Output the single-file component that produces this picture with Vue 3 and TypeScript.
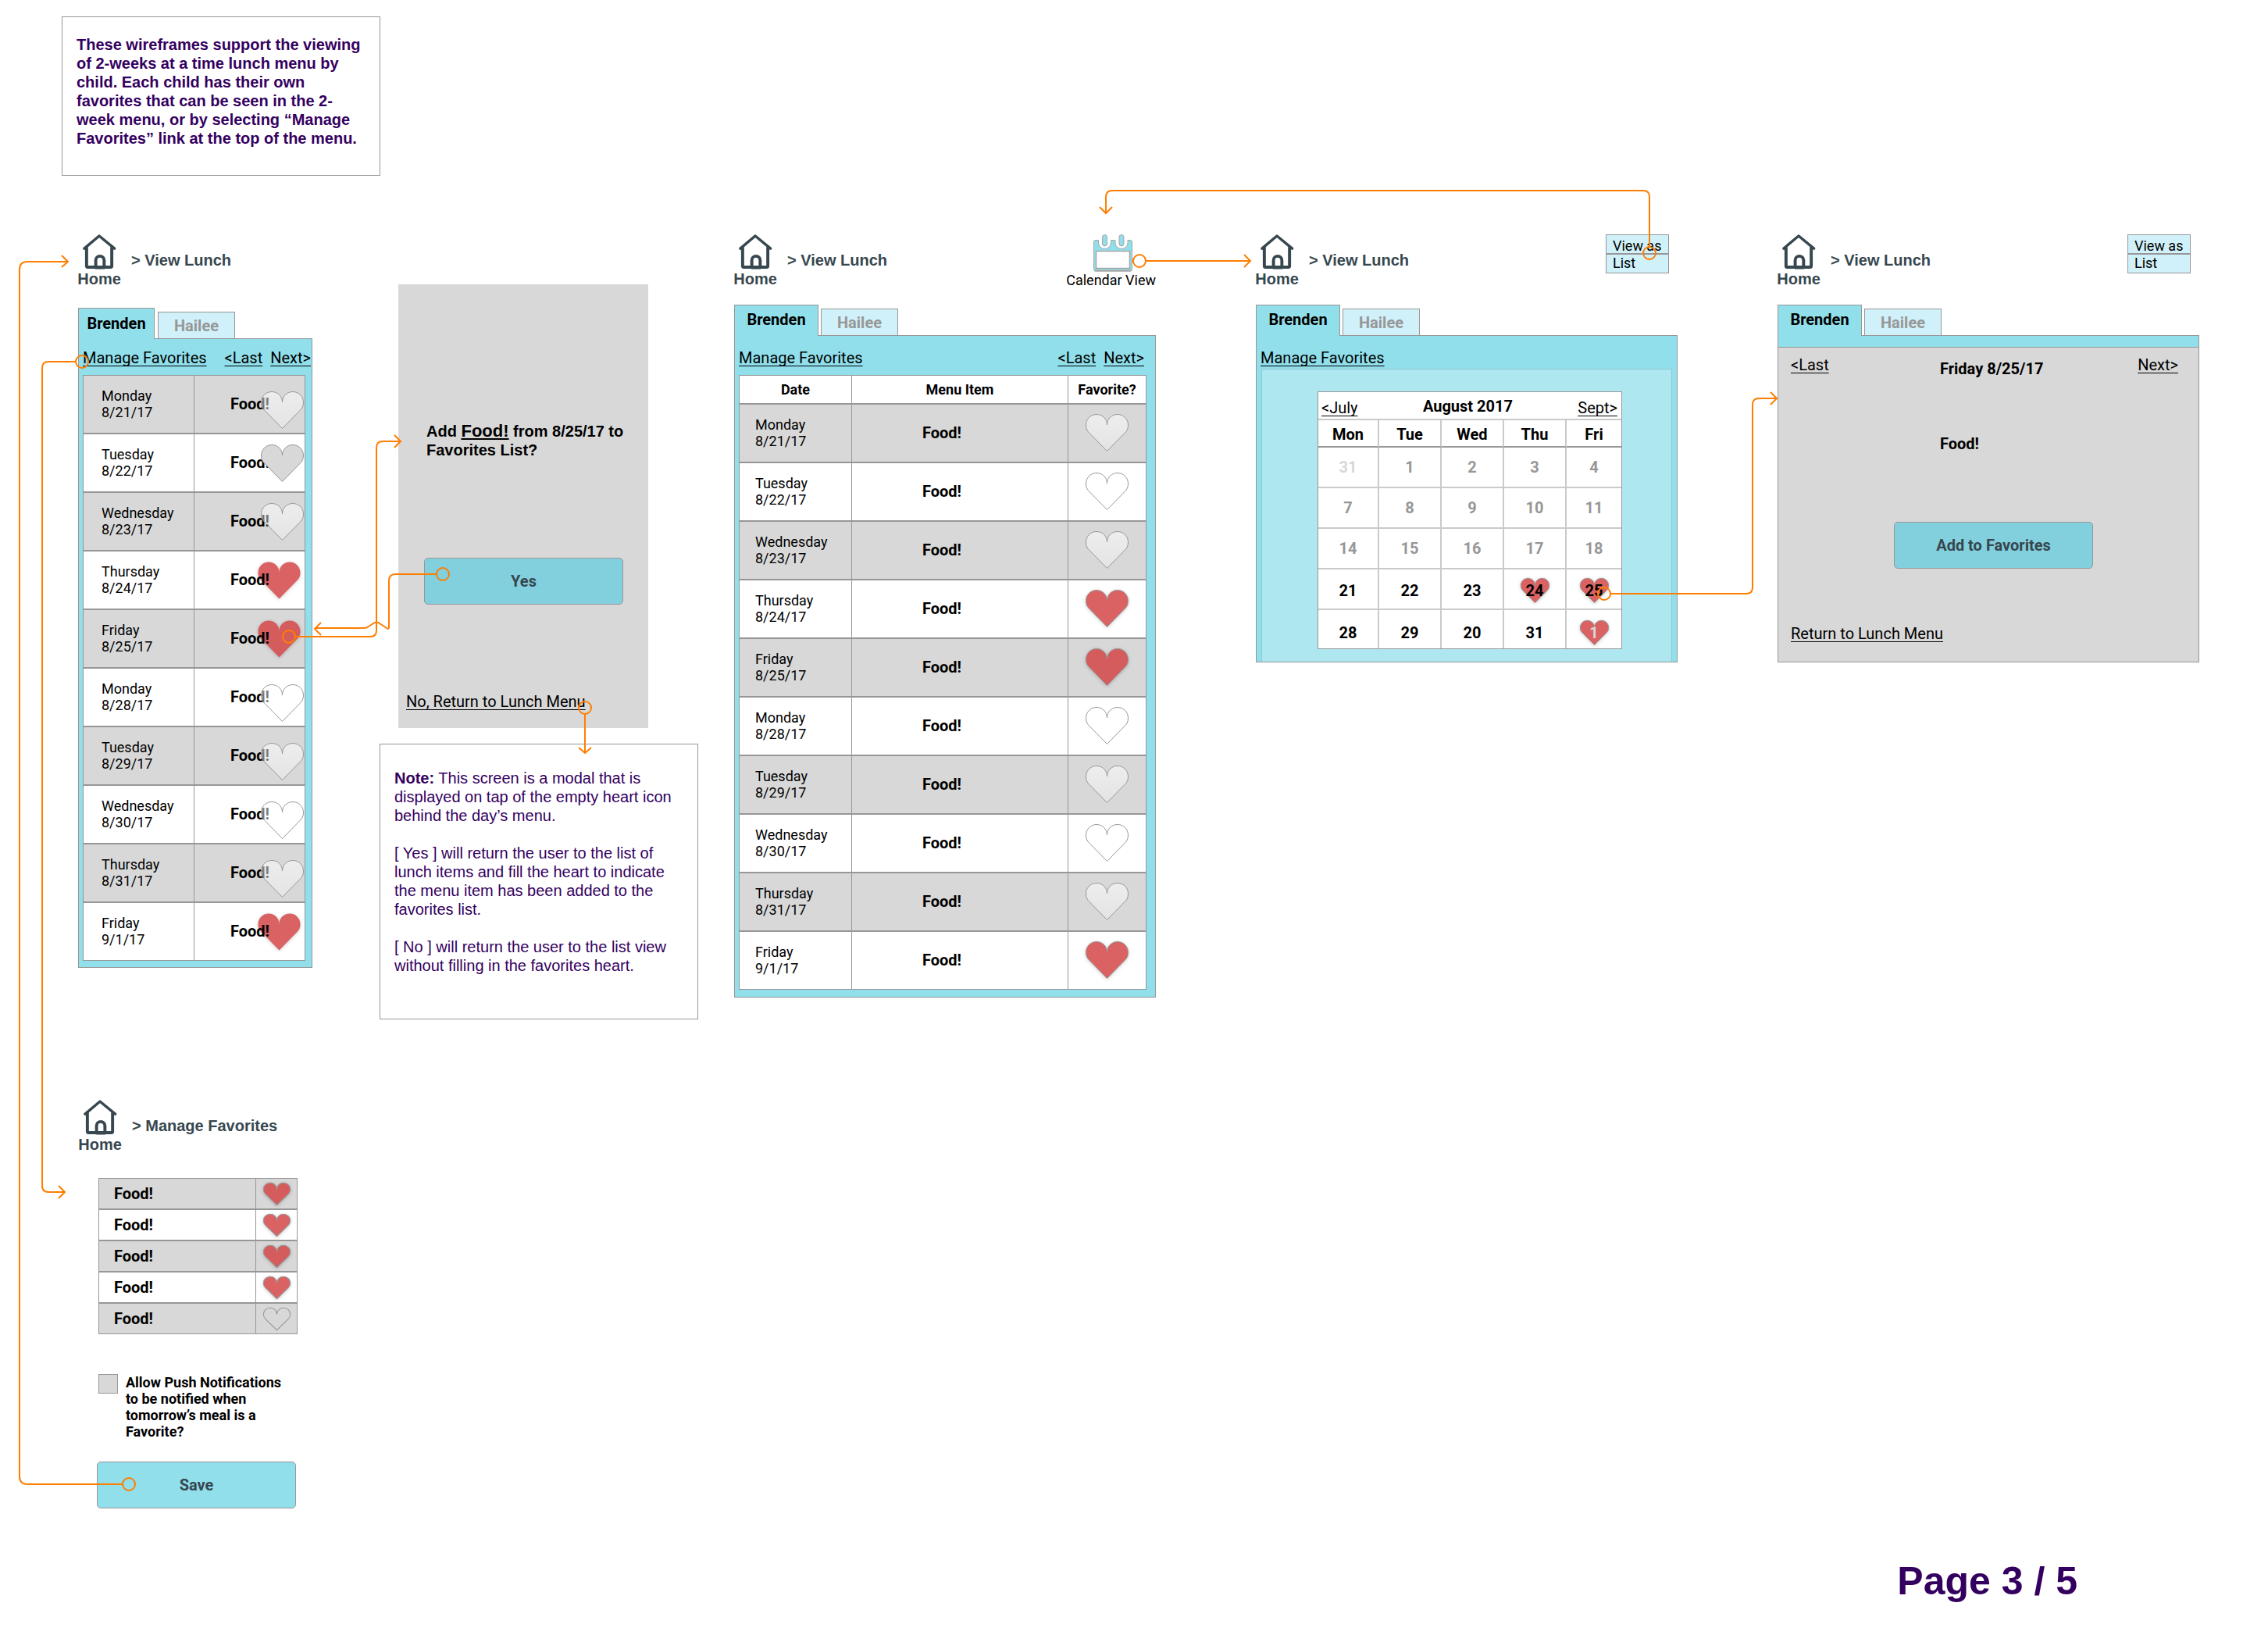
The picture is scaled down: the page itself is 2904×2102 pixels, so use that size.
<script setup lang="ts">
type HeartKind = 'empty' | 'grey' | 'full'

interface MenuDay {
  day: string
  date: string
  heart: HeartKind
  low?: boolean
}

interface CalendarDay {
  label: string
  tone: 'faint' | 'past' | 'open'
  favorite?: boolean
}

const menu: MenuDay[] = [
  { day: 'Monday', date: '8/21/17', heart: 'empty', low: true },
  { day: 'Tuesday', date: '8/22/17', heart: 'grey' },
  { day: 'Wednesday', date: '8/23/17', heart: 'empty' },
  { day: 'Thursday', date: '8/24/17', heart: 'full' },
  { day: 'Friday', date: '8/25/17', heart: 'full' },
  { day: 'Monday', date: '8/28/17', heart: 'empty', low: true },
  { day: 'Tuesday', date: '8/29/17', heart: 'empty', low: true },
  { day: 'Wednesday', date: '8/30/17', heart: 'empty', low: true },
  { day: 'Thursday', date: '8/31/17', heart: 'empty', low: true },
  { day: 'Friday', date: '9/1/17', heart: 'full' },
]

const favorites: HeartKind[] = ['full', 'full', 'full', 'full', 'empty']

const weekdays = ['Mon', 'Tue', 'Wed', 'Thu', 'Fri']

const past = (label: string): CalendarDay => ({ label, tone: 'past' })
const open = (label: string, favorite = false): CalendarDay => ({ label, tone: 'open', favorite })

const weeks: CalendarDay[][] = [
  [{ label: '31', tone: 'faint' }, past('1'), past('2'), past('3'), past('4')],
  ['7', '8', '9', '10', '11'].map(past),
  ['14', '15', '16', '17', '18'].map(past),
  [open('21'), open('22'), open('23'), open('24', true), open('25', true)],
  [open('28'), open('29'), open('20'), open('31'), { label: '1', tone: 'faint', favorite: true }],
]
</script>

<template>
  <main class="canvas">
    <svg class="defs" width="0" height="0" aria-hidden="true">
      <defs>
        <linearGradient id="sheen" x1="0" y1="0" x2="0" y2="1">
          <stop offset="0" stop-color="#fff" stop-opacity=".55" />
          <stop offset="1" stop-color="#fff" stop-opacity=".3" />
        </linearGradient>
        <path
          id="heart"
          vector-effect="non-scaling-stroke"
          d="M27.5 14C27.5 6 21.500 .5 14 .5C6.500 .5 .5 6.500 .5 14C.5 19 2 21.500 5 24.500L27.500 47.500L50 24.500C53 21.500 54.500 19 54.500 14C54.500 6.500 48.500 .5 41 .5C33.500 .5 27.500 6 27.500 14Z"
        />
        <g id="house" fill="none" stroke="#37474f" stroke-linejoin="round" stroke-linecap="round">
          <path stroke-width="3.5" d="M2.500 18.500L22 2L42 18.500" />
          <path stroke-width="4" d="M5.500 17.500V41.500Q5.500 43 7 43H37Q38.500 43 38.500 41.500V17.500" />
          <path stroke-width="4" d="M17.500 43.500V34a5.500 5.500 0 0 1 11 0V43.500Z" />
        </g>
      </defs>
    </svg>

    <p class="note intro">
      These wireframes support the viewing of 2-weeks at a time lunch menu by child. Each child has their own
      favorites that can be seen in the 2-week menu, or by selecting “Manage Favorites” link at the top of the menu.
    </p>

    <div class="board">
      <div class="phone">
        <section>
          <header class="head">
            <a class="home" href="#home"><svg width="44" height="45" viewBox="0 0 44 46"><use href="#house" /></svg>Home</a>
            <h2>&gt; View Lunch</h2>
          </header>
          <div class="tabs narrow">
            <button class="tab active" type="button">Brenden</button>
            <button class="tab" type="button">Hailee</button>
          </div>
          <div class="panel">
            <nav class="links narrow">
              <a href="#favorites">Manage Favorites</a>
              <span class="pager"><a href="#last">&lt;Last</a><a href="#next">Next&gt;</a></span>
            </nav>
            <table class="menu week compact">
              <tbody>
                <tr v-for="item in menu" :key="item.date">
                  <td class="date">{{ item.day }}<br />{{ item.date }}</td>
                  <td class="food">
                    <span>Food!</span>
                    <button type="button" class="fav over" :class="[item.heart, { low: item.low }]" :aria-label="'Favorite ' + item.date">
                      <svg class="heart big" :class="item.heart" viewBox="0 0 55 48"><use href="#heart" /></svg>
                    </button>
                  </td>
                </tr>
              </tbody>
            </table>
          </div>
        </section>

        <section class="manage">
          <header class="head">
            <a class="home" href="#home"><svg width="44" height="45" viewBox="0 0 44 46"><use href="#house" /></svg>Home</a>
            <h2>&gt; Manage Favorites</h2>
          </header>
          <table class="menu saved">
            <tbody>
              <tr v-for="(heart, i) in favorites" :key="i">
                <td class="food">Food!</td>
                <td class="mark">
                  <button type="button" class="fav" :aria-label="'Favorite ' + (i + 1)">
                    <svg class="heart small outlined" :class="[heart, { clear: heart === 'empty' }]" viewBox="0 0 55 48" preserveAspectRatio="none"><use href="#heart" /></svg>
                  </button>
                </td>
              </tr>
            </tbody>
          </table>
          <div class="push">
            <input id="push" type="checkbox" />
            <label for="push">Allow Push Notifications to be notified when tomorrow’s meal is a Favorite?</label>
          </div>
          <button class="action save" type="button">Save</button>
        </section>
      </div>

      <div class="confirm">
        <section class="modal">
          <p class="question">Add <u>Food!</u> from 8/25/17 to<br />Favorites List?</p>
          <button class="action dim" type="button">Yes</button>
          <a class="back" href="#menu">No, Return to Lunch Menu</a>
        </section>
        <div class="note remark">
          <p><b>Note:</b> This screen is a modal that is displayed on tap of the empty heart icon behind the day’s menu.</p>
          <p>[ Yes ] will return the user to the list of lunch items and fill the heart to indicate the menu item has been added to the favorites list.</p>
          <p>[ No ] will return the user to the list view without filling in the favorites heart.</p>
        </div>
      </div>

      <section class="wide">
        <header class="head">
          <a class="home" href="#home"><svg width="44" height="45" viewBox="0 0 44 46"><use href="#house" /></svg>Home</a>
          <h2>&gt; View Lunch</h2>
          <a class="calendar-link" href="#calendar">
            <svg width="50" height="48" viewBox="0 0 50 48">
              <g stroke="#a6a6a6" fill="#90dfeb">
                <path
                  d="M3 7.500H6.500V11a8 7.500 0 0 0 16 0V7.500H28V11a8 7.500 0 0 0 16 0V7.500H47Q49.500 7.500 49.500 10V44.500Q49.500 47 47 47H3Q.5 47 .5 44.500V10Q.5 7.500 3 7.500Z"
                />
                <path stroke-width="2" d="M1.500 46.500H48.500" />
                <rect x="3.500" y="21.500" width="43" height="22" fill="#fff" stroke-width="1.5" />
                <rect x="11.500" y=".5" width="6" height="14.500" rx="3" />
                <rect x="33" y=".5" width="6" height="14.500" rx="3" />
              </g>
            </svg>
            Calendar View
          </a>
        </header>
        <div class="tabs">
          <button class="tab active" type="button">Brenden</button>
          <button class="tab" type="button">Hailee</button>
        </div>
        <div class="panel">
          <nav class="links">
            <a href="#favorites">Manage Favorites</a>
            <span class="pager"><a href="#last">&lt;Last</a><a href="#next">Next&gt;</a></span>
          </nav>
          <table class="menu week full-list">
            <thead>
              <tr>
                <th scope="col">Date</th>
                <th scope="col">Menu Item</th>
                <th scope="col">Favorite?</th>
              </tr>
            </thead>
            <tbody>
              <tr v-for="item in menu" :key="item.date">
                <td class="date">{{ item.day }}<br />{{ item.date }}</td>
                <td class="food">Food!</td>
                <td class="mark">
                  <button type="button" class="fav" :aria-label="'Favorite ' + item.date">
                    <svg class="heart big outlined" :class="item.heart === 'full' ? 'full' : 'empty'" viewBox="0 0 55 48"><use href="#heart" /></svg>
                  </button>
                </td>
              </tr>
            </tbody>
          </table>
        </div>
      </section>

      <section class="wide spaced">
        <header class="head">
          <a class="home" href="#home"><svg width="44" height="45" viewBox="0 0 44 46"><use href="#house" /></svg>Home</a>
          <h2>&gt; View Lunch</h2>
          <a class="list-link" href="#list"><span>View as</span><span>List</span></a>
        </header>
        <div class="tabs">
          <button class="tab active" type="button">Brenden</button>
          <button class="tab" type="button">Hailee</button>
        </div>
        <div class="panel">
          <nav class="links calendar-nav"><a href="#favorites">Manage Favorites</a></nav>
          <div class="backdrop">
            <div class="calendar">
              <div class="month">
                <a href="#july">&lt;July</a>
                <h3>August 2017</h3>
                <a href="#sept">Sept&gt;</a>
              </div>
              <table class="days">
                <thead>
                  <tr>
                    <th v-for="name in weekdays" :key="name" scope="col">{{ name }}</th>
                  </tr>
                </thead>
                <tbody>
                  <tr v-for="(week, w) in weeks" :key="w" :class="{ current: w > 2 }">
                    <td v-for="day in week" :key="day.label" :class="day.tone">
                      <span class="day">
                        <svg v-if="day.favorite" class="heart tiny full outlined" viewBox="0 0 55 48" preserveAspectRatio="none"><use href="#heart" /></svg>
                        <b>{{ day.label }}</b>
                      </span>
                    </td>
                  </tr>
                </tbody>
              </table>
            </div>
          </div>
        </div>
      </section>

      <section class="wide spaced">
        <header class="head">
          <a class="home" href="#home"><svg width="44" height="45" viewBox="0 0 44 46"><use href="#house" /></svg>Home</a>
          <h2>&gt; View Lunch</h2>
          <a class="list-link" href="#list"><span>View as</span><span>List</span></a>
        </header>
        <div class="tabs">
          <button class="tab active" type="button">Brenden</button>
          <button class="tab" type="button">Hailee</button>
        </div>
        <div class="panel detail">
          <div class="sheet">
            <div class="sheet-head">
              <a href="#last">&lt;Last</a>
              <h3>Friday 8/25/17</h3>
              <a href="#next">Next&gt;</a>
            </div>
            <p class="dish">Food!</p>
            <button class="action dim" type="button">Add to Favorites</button>
            <a class="back" href="#menu">Return to Lunch Menu</a>
          </div>
        </div>
      </section>
    </div>

    <footer class="page">Page 3 / 5</footer>

    <svg class="flows" aria-hidden="true">
      <!-- Save returns to View Lunch -->
      <circle cx="165" cy="1900" r="8" />
      <path d="M157 1900H35Q25 1900 25 1890V345Q25 335 35 335H87M79 327L87 335L79 342" />
      <!-- Manage Favorites opens its screen -->
      <circle cx="105" cy="463" r="8" />
      <path d="M97 463H62Q54 463 54 471V1518Q54 1526 62 1526H83M75 1518L83 1526L75 1534" />
      <!-- A heart opens the confirmation -->
      <circle cx="370" cy="815" r="8" />
      <path d="M378 815H474Q482 815 482 807V573Q482 565 490 565H513M505 557L513 565L505 573" />
      <!-- Yes returns to the list -->
      <circle cx="567" cy="735" r="8" />
      <path d="M559 735H506Q498 735 498 744V803Q498 806 495 804L486 798Q482 795 478 798L472 802Q469 804 466 804H404M411 797L403 805L411 813" />
      <circle cx="749" cy="906" r="8" />
      <path d="M749 914V964M741 957L749 964L757 957" />
      <circle cx="1459" cy="334" r="8" />
      <path d="M1467 334H1601M1593 326L1601 334L1593 342" />
      <circle cx="2112" cy="324" r="8" />
      <path d="M2112 316V252Q2112 244 2104 244H1424Q1416 244 1416 252V272M1408 265L1416 273L1424 265" />
      <circle cx="2054" cy="760" r="8" />
      <path d="M2062 760H2236Q2244 760 2244 752V518Q2244 510 2252 510H2275M2267 502L2275 510L2267 518" />
    </svg>
  </main>
</template>

<style>
body {
  margin: 0;
  background: #fff;
}
</style>

<style scoped>
.canvas {
  position: relative;
  padding: 21px 0 40px 79px;
  color: #000;
  font: 20px/24px Roboto, sans-serif;
}
.canvas *,
.canvas *::before {
  box-sizing: border-box;
}
.defs {
  position: absolute;
}
h2,
h3,
p {
  margin: 0;
  font-size: 20px;
  line-height: 24px;
}
a {
  color: inherit;
  text-decoration: underline;
  text-decoration-thickness: 1px;
  text-underline-offset: 3px;
  text-decoration-skip-ink: none;
}
button {
  margin: 0;
  padding: 0;
  font: inherit;
  color: inherit;
}
table {
  border-spacing: 0;
  table-layout: fixed;
}
td,
th {
  padding: 0;
}

/* Notes */
.note {
  width: 408px;
  border: 1px solid #979797;
  color: #34005f;
  font-family: 'Liberation Sans', Arial, sans-serif;
}
.intro {
  padding: 23px 20px 35px 18px;
  font-weight: 700;
}
.remark {
  margin-top: 20px;
  padding: 31px 20px 56px 18px;
}
.remark p + p {
  margin-top: 24px;
}

/* Board */
.board {
  display: flex;
  align-items: flex-start;
  margin: 75px 0 0 21px;
}
.phone {
  flex: none;
  width: 300px;
}
.confirm {
  flex: none;
  margin: 64px 46px 0 86px;
}
.wide {
  flex: none;
  width: 540px;
}
.spaced {
  margin-left: 128px;
}

/* Screen header */
.head {
  display: flex;
  align-items: flex-start;
  height: 90px;
  color: #37474f;
  font-family: 'Liberation Sans', Arial, sans-serif;
}
.home {
  display: flex;
  flex-direction: column;
  align-items: center;
  width: 54px;
  font-weight: 700;
  text-decoration: none;
}
.home svg,
.calendar-link svg {
  display: block;
}
.head h2 {
  margin: 21px 0 0 14px;
  white-space: nowrap;
}
.calendar-link {
  display: flex;
  flex-direction: column;
  align-items: center;
  margin-left: auto;
  color: #000;
  font: 18px/21px Roboto, sans-serif;
  text-decoration: none;
}
.calendar-link svg {
  margin-left: 5px;
}
.list-link {
  display: flex;
  flex-direction: column;
  width: 81px;
  margin: 0 11px 0 auto;
  border: 1px solid #979797;
  background: #d0f1f9;
  color: #000;
  font: 18px/21px Roboto, sans-serif;
  text-decoration: none;
}
.list-link span {
  height: 23px;
  padding-left: 8px;
}
.list-link span:first-child {
  height: 25px;
  padding-top: 3px;
  border-bottom: 2px solid #979797;
}

/* Tabs and panel */
.tabs {
  position: relative;
  z-index: 1;
  display: flex;
  align-items: flex-end;
  gap: 3px;
}
.tabs.narrow {
  gap: 4px;
  margin-top: 4px;
}
.tab {
  width: 99px;
  height: 34px;
  margin-bottom: 1px;
  border: 1px solid #979797;
  border-bottom: 0;
  background: #d0f1f9;
  color: #979797;
  font-weight: 700;
}
.tab.active {
  width: 108px;
  height: 40px;
  margin-bottom: 0;
  padding-bottom: 3px;
  background: #90dfeb;
  color: #000;
}
.narrow .tab.active {
  width: 98px;
  padding-bottom: 1px;
}
.panel {
  margin-top: -1px;
  border: 1px solid #979797;
  background: #90dfeb;
}
.links {
  display: flex;
  justify-content: space-between;
  padding: 16px 14px 10px 5px;
}
.links.narrow {
  padding: 12px 1px 10px 5px;
}
.links.calendar-nav {
  padding-bottom: 2px;
}
.pager {
  display: flex;
  gap: 10px;
}

/* Menu tables */
.menu {
  border: 1px solid #979797;
  background: #fff;
}
.menu td {
  height: 75px;
  border-bottom: 2px solid #979797;
}
.menu tr:last-child td {
  height: 73px;
  border-bottom: 0;
}
.menu td + td,
.menu th + th {
  border-left: 1px solid #979797;
}
.menu tbody tr:nth-child(odd) {
  background: #d8d8d8;
}
.menu .date {
  font-size: 18px;
  line-height: 21px;
}
.menu .food {
  font-weight: 700;
}
.week td {
  padding-bottom: 2px;
}
.mark {
  text-align: center;
}
.compact {
  width: 285px;
  margin: 0 0 8px 5px;
}
.compact .date {
  width: 141px;
  padding-left: 23px;
}
.compact .food {
  position: relative;
  padding-left: 46px;
}
.compact .food span {
  position: relative;
  z-index: 1;
}
.full-list {
  width: 522px;
  margin: 0 0 9px 5px;
}
.full-list th {
  height: 37px;
  border-bottom: 2px solid #979797;
  font-size: 18px;
  line-height: 21px;
}
.full-list th:first-child {
  width: 143px;
}
.full-list th:last-child {
  width: 100px;
}
.full-list .date {
  padding-left: 20px;
}
.full-list .food {
  padding-left: 90px;
}

/* Hearts */
.fav {
  display: inline-block;
  border: 0;
  background: none;
  vertical-align: middle;
}
.over {
  position: absolute;
  z-index: 2;
  top: 13px;
  right: 1px;
}
.over.low {
  top: 20px;
}
.over.full {
  z-index: 0;
  right: 5px;
}
.heart {
  display: block;
  overflow: visible;
  fill: url(#sheen);
  stroke: #979797;
  stroke-width: 1px;
}
.heart.grey {
  fill: #d8d8d8;
}
.heart.full {
  fill: #db6263;
  stroke: none;
  filter: drop-shadow(0 1px 2px rgba(0, 0, 0, 0.2));
}
tr:nth-child(odd) .mark .heart.full,
tr:nth-child(odd) .over .heart.full {
  fill: #d45c5c;
}
.heart.full.outlined {
  stroke: #979797;
}
.heart.clear {
  fill: none;
}
.heart.big {
  width: 55px;
  height: 48px;
}
.heart.small {
  width: 35px;
  height: 29px;
}
.heart.tiny {
  width: 37px;
  height: 32px;
}

/* Manage favorites */
.manage {
  margin: 169px 0 0 1px;
}
.manage .head {
  height: 100px;
}
.saved {
  width: 255px;
  margin-left: 25px;
}
.saved td {
  height: 40px;
}
.saved tr:last-child td {
  height: 38px;
}
.saved .food {
  width: 200px;
  padding-left: 19px;
}
.push {
  display: flex;
  align-items: flex-start;
  gap: 10px;
  margin: 51px 0 28px 25px;
  font-size: 18px;
  font-weight: 700;
  line-height: 21px;
}
.push input {
  flex: none;
  width: 25px;
  height: 25px;
  margin: 0;
  appearance: none;
  border: 1px solid #979797;
  background: #d8d8d8;
}
.push label {
  width: 208px;
}
.action {
  display: block;
  width: 255px;
  height: 60px;
  border: 1px solid #979797;
  border-radius: 5px;
  background: #90dfeb;
  color: #37474f;
  font-weight: 700;
}
.action.dim {
  background: #82d0dd;
}
.save {
  margin-left: 23px;
}

/* Confirmation modal */
.modal {
  width: 320px;
  margin-left: 24px;
  padding: 176px 0 22px 33px;
  background: #d8d8d8;
}
.question {
  margin-left: 3px;
  font-family: 'Liberation Sans', Arial, sans-serif;
  font-weight: 700;
  white-space: nowrap;
}
.question u {
  font-size: 22px;
  text-decoration-thickness: 2px;
  text-underline-offset: 2px;
}
.modal .action {
  margin-top: 126px;
}
.modal .back {
  display: block;
  width: fit-content;
  margin: 112px 0 0 -23px;
}

/* Calendar */
.backdrop {
  margin: 0 6px;
  padding: 28px 63px 16px 71px;
  border: 1px solid #90c9d3;
  border-bottom: 0;
  background: #aee7f0;
}
.calendar {
  border: 1px solid #979797;
  background: #fff;
}
.month {
  display: flex;
  justify-content: space-between;
  height: 36px;
  padding: 6px 5px 0 4px;
  border-bottom: 2px solid #cacaca;
}
.month a {
  margin-top: 2px;
}
.days {
  width: 100%;
}
.days th {
  width: 80px;
  height: 35px;
  padding-top: 2px;
  border-bottom: 2px solid #979797;
}
.days th:first-child {
  width: 78px;
}
.days th:last-child {
  width: 70px;
}
.days th:not(:last-child),
.days td:not(:last-child) {
  border-right: 2px solid #cacaca;
}
.days td {
  height: 52px;
  border-bottom: 2px solid #cacaca;
  text-align: center;
}
.days .current td {
  padding-top: 4px;
}
.days .current:last-child td {
  height: 49px;
  padding-top: 8px;
  border-bottom: 0;
}
.day {
  display: grid;
  grid-template-rows: 24px;
  place-items: center;
}
.day > * {
  grid-area: 1 / 1;
}
.day b {
  position: relative;
}
.past {
  color: #979797;
}
.faint {
  color: #d8d8d8;
}

/* Day detail */
.detail {
  padding-top: 14px;
}
.sheet {
  padding: 10px 26px 24px 16px;
  border-top: 1px solid #979797;
  background: #d8d8d8;
}
.sheet-head {
  display: grid;
  grid-template-columns: 191px 1fr auto;
}
.sheet-head a {
  justify-self: start;
}
.sheet-head h3 {
  padding-top: 5px;
}
.dish {
  margin: 72px 0 88px 191px;
  font-weight: 700;
}
.sheet .action {
  margin-left: 132px;
}
.sheet .back {
  display: block;
  width: fit-content;
  margin-top: 71px;
}

.page {
  margin-top: 63px;
  padding-right: 244px;
  color: #34005f;
  font: 700 50px/60px 'Liberation Sans', Arial, sans-serif;
  text-align: right;
}

/* Flow arrows over the screens */
.flows {
  position: absolute;
  top: 0;
  left: 0;
  z-index: 3;
  width: 100%;
  height: 100%;
  overflow: visible;
  fill: none;
  stroke: #ff7e00;
  stroke-width: 2px;
  pointer-events: none;
}
</style>
